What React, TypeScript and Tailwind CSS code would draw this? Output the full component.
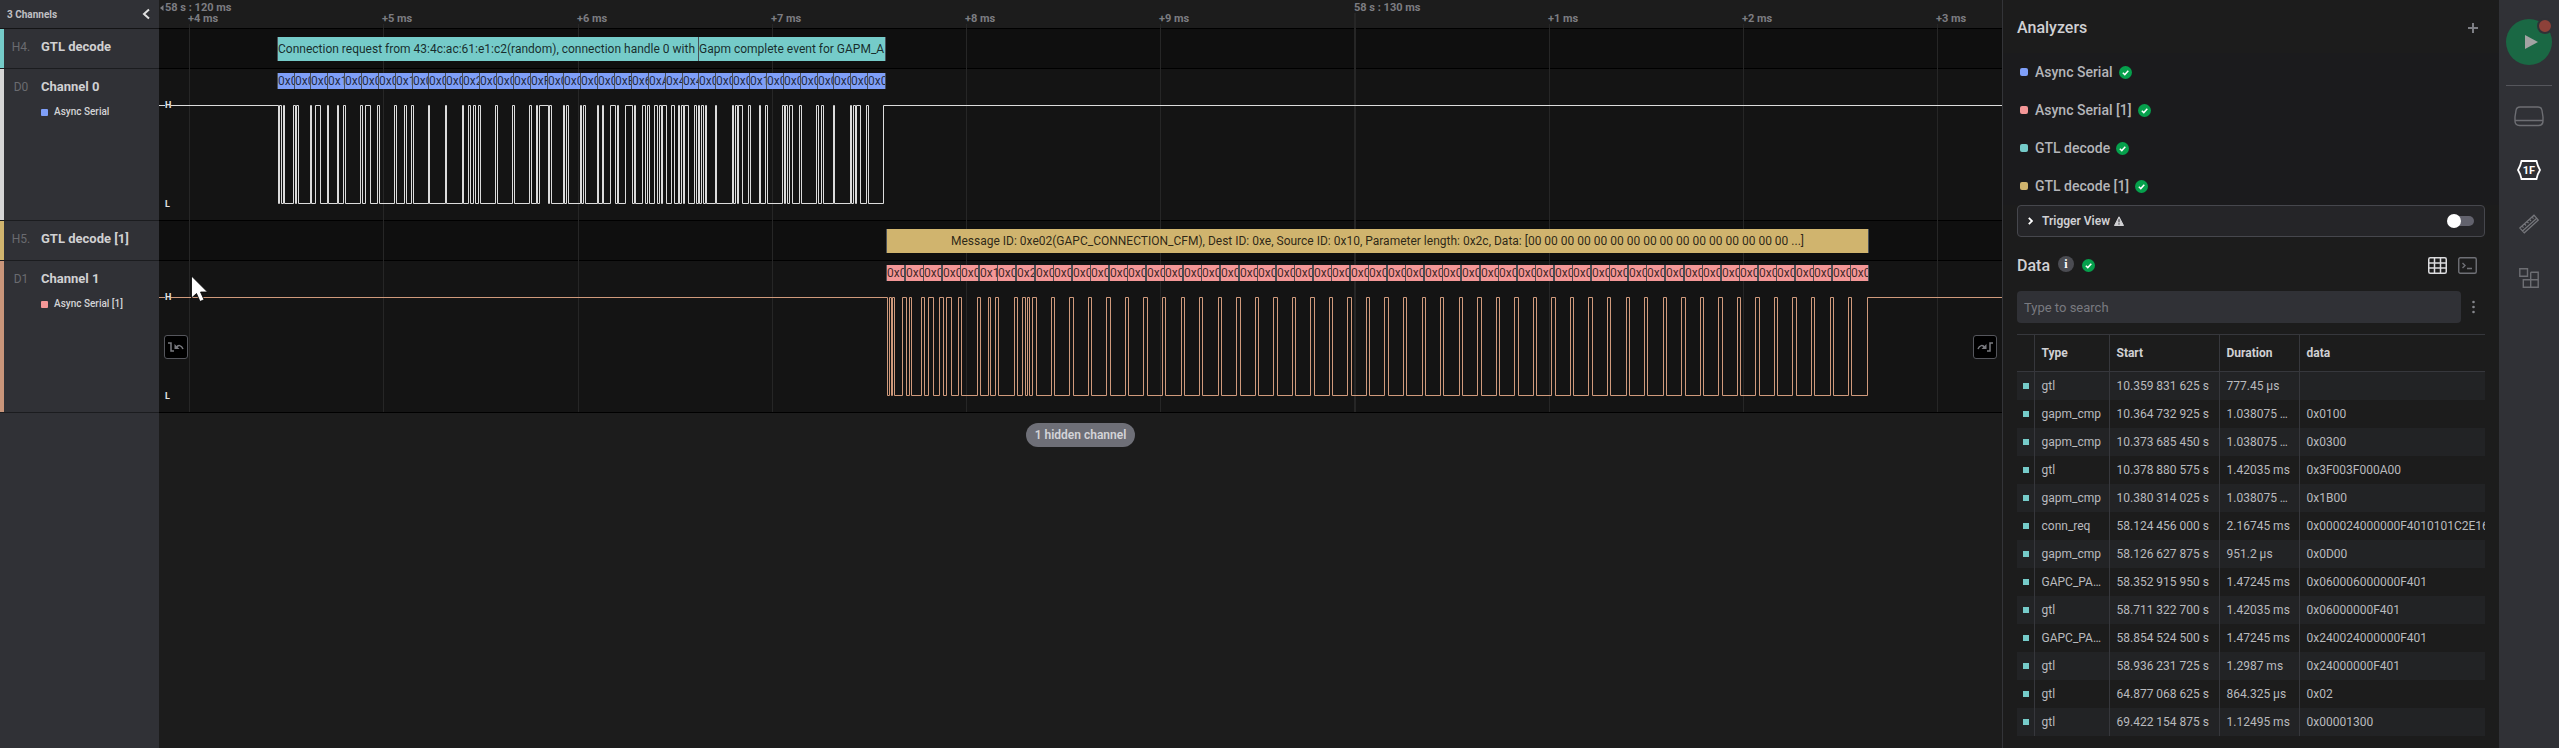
import React from "react";

const LEFT = 159;

const wave0 = [
  278, 279, 281, 283, 284, 293, 295, 296, 298, 310, 311, 315, 320, 327, 328, 337, 338, 343, 345, 360, 362, 365, 370, 377, 379,
  394, 396, 404, 406, 411, 413, 428, 429, 445, 446, 462, 463, 468, 470, 473, 475, 478, 480, 495, 497, 512, 514, 529, 531, 536,
  537, 539, 548, 549, 551, 563, 564, 566, 568, 580, 581, 583, 585, 597, 598, 602, 603, 610, 615, 617, 618, 625, 632, 634, 635,
  642, 645, 647, 649, 654, 657, 659, 661, 662, 666, 671, 674, 678, 679, 681, 683, 684, 688, 694, 696, 698, 699, 701, 703, 705,
  706, 715, 716, 732, 733, 735, 737, 738, 742, 748, 750, 759, 760, 765, 767, 782, 784, 785, 787, 789, 792, 799, 801, 816, 818,
  821, 823, 833, 834, 850, 851, 853, 855, 856, 860, 866, 868, 883,
];

const wave1 = [
  887, 889, 891, 892, 894, 902, 906, 909, 911, 921, 924, 928, 933, 939, 943, 946, 951, 958, 961, 977, 980, 988, 990, 995, 998,
  1014, 1017, 1022, 1025, 1027, 1029, 1032, 1036, 1051, 1054, 1069, 1073, 1088, 1091, 1106, 1110, 1125, 1128, 1143, 1147, 1162,
  1165, 1181, 1184, 1199, 1202, 1218, 1221, 1236, 1240, 1255, 1258, 1273, 1277, 1292, 1295, 1310, 1314, 1329, 1332, 1347, 1351,
  1366, 1369, 1384, 1388, 1403, 1406, 1422, 1425, 1440, 1443, 1459, 1462, 1477, 1481, 1496, 1499, 1514, 1518, 1533, 1536, 1551,
  1555, 1570, 1573, 1588, 1592, 1607, 1610, 1626, 1629, 1644, 1647, 1663, 1666, 1681, 1685, 1700, 1703, 1718, 1722, 1737, 1740,
  1755, 1759, 1774, 1777, 1792, 1796, 1811, 1814, 1830, 1833, 1848, 1851, 1867,
];

const bytes0 = [
  278, 295, 311, 328, 345, 362, 379, 396, 413, 429, 446, 463, 480, 497, 514, 531, 548, 564, 581, 598, 615, 632, 649, 666, 683,
  699, 716, 733, 750, 767, 784, 801, 818, 834, 851, 868, 886,
];
const bytes0Text: Record<number, string> = { 3: "0x1", 7: "0x1", 11: "0x2", 15: "0xF", 20: "0xE", 21: "0x6", 22: "0xA", 23: "0x4", 24: "0x4", 28: "0x1" };

const bytes1 = [
  887, 906, 924, 943, 961, 980, 998, 1017, 1036, 1054, 1073, 1091, 1110, 1128, 1147, 1165, 1184, 1202, 1221, 1240, 1258, 1277,
  1295, 1314, 1332, 1351, 1369, 1388, 1406, 1425, 1443, 1462, 1481, 1499, 1518, 1536, 1555, 1573, 1592, 1610, 1629, 1647, 1666,
  1685, 1703, 1722, 1740, 1759, 1777, 1796, 1814, 1833, 1851, 1869,
];
const bytes1Text: Record<number, string> = { 5: "0x1", 7: "0x2" };

function Wave({ edges, color }: { edges: number[]; color: string }) {
  let high = true;
  let d = "M0 0.5";
  for (const e of edges) {
    d += `H${e - LEFT + 0.5}V${high ? 98.5 : 0.5}`;
    high = !high;
  }
  d += "H2400";
  return (
    <svg className="block h-[99px] w-full overflow-hidden" aria-hidden="true">
      <path d={d} fill="none" stroke={color} strokeWidth="1" />
    </svg>
  );
}

function Bytes({ starts, labels, className }: { starts: number[]; labels: Record<number, string>; className: string }) {
  return (
    <div className="flex h-4 text-xs leading-4 text-black/75" style={{ marginLeft: starts[0] - LEFT - 1 }}>
      <span className="w-px shrink-0 bg-[#4a5058]" />
      {starts.slice(0, -1).map((s, i) => {
        const width = starts[i + 1] - s;
        return (
          <div key={s} className={`shrink-0 overflow-hidden border-[#4a5058] ${className}`} style={{ width, borderRightWidth: Math.max(1, width - 17) }}>
            {labels[i] ?? "0x0"}
          </div>
        );
      })}
    </div>
  );
}

const ticks: { x: number; label: string; major?: boolean }[] = [
  { x: 189, label: "+4 ms" },
  { x: 383, label: "+5 ms" },
  { x: 578, label: "+6 ms" },
  { x: 772, label: "+7 ms" },
  { x: 966, label: "+8 ms" },
  { x: 1160, label: "+9 ms" },
  { x: 1354, label: "58 s : 130 ms", major: true },
  { x: 1549, label: "+1 ms" },
  { x: 1743, label: "+2 ms" },
  { x: 1937, label: "+3 ms" },
];

function Level({ color, edges }: { color: string; edges: number[] }) {
  return (
    <div className="relative mt-4">
      <Wave edges={edges} color={color} />
      <span className="absolute -top-2 left-[6px] h-4 text-[9px] leading-4 font-bold text-[#e4e4e4]">
        <span className="bg-[#141414]">H</span>
      </span>
      <span className="absolute -bottom-2 left-[6px] h-4 text-[9px] leading-4 font-bold text-[#e4e4e4]">L</span>
    </div>
  );
}

function Timeline() {
  return (
    <main className="relative min-w-0 flex-1 overflow-hidden bg-[#1c1c1c]">
      <header className="relative h-[29px] border-b border-black text-[11px] leading-3 font-bold text-[#7c7d82]">
        <span className="absolute top-[2px] left-0 flex items-center whitespace-nowrap">
          <svg className="h-[6px] w-[6px]" viewBox="0 0 6 6" aria-hidden="true">
            <path d="M4.500 0v6L1 3z" fill="currentColor" />
          </svg>
          58 s : 120 ms
        </span>
        {ticks.map((t) => (
          <span key={t.x} className={`absolute whitespace-nowrap ${t.major ? "top-[2px]" : "top-[13px]"}`} style={{ left: t.x - LEFT - (t.major ? 0 : 1) }}>
            {t.label}
          </span>
        ))}
      </header>
      <section className="h-10 border-b border-black bg-[#0f0f0f] pt-2">
        <div className="relative z-10 ml-[118px] flex h-6 text-xs leading-6 text-black/80">
          <div className="w-[421px] shrink-0 overflow-hidden border-l border-[#4a5058] bg-[#75cbc9] whitespace-nowrap">
            Connection request from 43:4c:ac:61:e1:c2(random), connection handle 0 with
          </div>
          <div className="w-[188px] shrink-0 overflow-hidden border-x border-[#4a5058] bg-[#75cbc9] whitespace-nowrap">
            Gapm complete event for GAPM_A
          </div>
        </div>
      </section>
      <section className="h-[152px] border-b border-black bg-[#141414] pt-1">
        <div className="relative z-10">
          <Bytes starts={bytes0} labels={bytes0Text} className="bg-[#7f9ff8]" />
          <Level edges={wave0} color="#dcdcdc" />
        </div>
      </section>
      <section className="h-10 border-b border-black bg-[#0f0f0f] pt-2">
        <div className="relative z-10 ml-[727px] h-6 w-[983px] overflow-hidden border-x border-[#4a5058] bg-[#d0b46e] text-center text-xs leading-6 whitespace-nowrap text-black/80">
          Message ID: 0xe02(GAPC_CONNECTION_CFM), Dest ID: 0xe, Source ID: 0x10, Parameter length: 0x2c, Data: [00 00 00 00 00 00 00 00 00 00 00 00 00 00 00 00 ...]
        </div>
      </section>
      <section className="h-[152px] border-b border-black bg-[#141414] pt-1">
        <div className="relative z-10">
          <Bytes starts={bytes1} labels={bytes1Text} className="bg-[#f49797]" />
          <Level edges={wave1} color="#d09a7c" />
        </div>
      </section>
      <svg className="pointer-events-none absolute top-0 left-0 h-[412px] w-full" aria-hidden="true">
        {ticks.map((t) => (
          <rect key={t.x} x={t.x - LEFT} y={t.major ? 13 : 24} width={t.major ? 2 : 1} height="400" fill="#262626" />
        ))}
      </svg>
      <div className="flex justify-center pt-[10px]">
        <button className="h-6 rounded-xl bg-[#6e6f77] px-[9px] text-xs leading-6 font-semibold text-[#d4d4d8]">1 hidden channel</button>
      </div>
      <button
        aria-label="Previous edge"
        className="absolute top-[335px] left-[5px] z-20 flex h-6 w-6 items-center justify-center rounded-[3px] border border-[#55565c] bg-black text-[#7a7b80]"
      >
        <svg className="h-4 w-4" viewBox="0 0 16 16" fill="none" stroke="currentColor" strokeWidth="1.500" aria-hidden="true">
          <path d="M0 4h3v8h3M8.500 8.500c1.500-3 5-2.500 6.500 1.500" />
          <path d="M6.500 5v5h5z" fill="currentColor" stroke="none" />
        </svg>
      </button>
      <button
        aria-label="Next edge"
        className="absolute top-[335px] right-[5px] z-20 flex h-6 w-6 items-center justify-center rounded-[3px] border border-[#55565c] bg-black text-[#7a7b80]"
      >
        <svg className="h-4 w-4" viewBox="0 0 16 16" fill="none" stroke="currentColor" strokeWidth="1.500" aria-hidden="true">
          <path d="M1 10c1.500-4 5-4.500 6.500-1.500M10 12h3V4h3" />
          <path d="M9.500 5v5h-5z" fill="currentColor" stroke="none" />
        </svg>
      </button>
      <svg className="absolute top-[275px] left-8 z-30 h-7 w-5" viewBox="0 0 20 28" aria-hidden="true">
        <path d="M.5 1v22l5-4.500 3.500 8 4-1.800-3.500-7.700h7z" fill="#fff" stroke="#000" strokeWidth=".8" />
      </svg>
    </main>
  );
}

function Row({ id, name, stripe, height, child, childColor }: { id: string; name: string; stripe: string; height: string; child?: string; childColor?: string }) {
  return (
    <li className={`flex border-b border-[#1b1c1f] ${height}`}>
      <span className={`w-1 ${stripe}`} />
      <span className="mr-[3px] w-[34px] pt-[10px] text-center text-xs leading-4 text-[#6a6b70]">{id}</span>
      <div className="pt-[10px]">
        <div className="text-[13px] leading-4 font-bold text-[#d0d0d2]">{name}</div>
        {child && (
          <div className="mt-[9px] flex items-center gap-[6px] text-[10px] leading-4 font-medium text-[#d4d4d6]">
            <i className={`h-[7px] w-[7px] rounded-[1px] ${childColor}`} />
            {child}
          </div>
        )}
      </div>
    </li>
  );
}

function Channels() {
  return (
    <aside className="w-[159px] shrink-0 bg-[#303136]">
      <header className="flex h-[29px] items-center justify-between border-b border-[#141416] pr-[9px] pl-[7px] text-[10px] font-bold text-[#c0c0c4]">
        3 Channels
        <button aria-label="Collapse channels">
          <svg className="h-3 w-2" viewBox="0 0 8 12" fill="none" stroke="#e0e0e0" strokeWidth="2" aria-hidden="true">
            <path d="M7 1.500 2 6l5 4.500" />
          </svg>
        </button>
      </header>
      <ul>
        <Row id="H4." name="GTL decode" stripe="bg-[#75cbc9]" height="h-10" />
        <Row id="D0" name="Channel 0" stripe="bg-[#d6d6d6]" height="h-[152px]" child="Async Serial" childColor="bg-[#7f9ff8]" />
        <Row id="H5." name="GTL decode [1]" stripe="bg-[#d0b46e]" height="h-10" />
        <Row id="D1" name="Channel 1" stripe="bg-[#c9957a]" height="h-[152px]" child="Async Serial [1]" childColor="bg-[#f49797]" />
      </ul>
    </aside>
  );
}

function Check() {
  return (
    <svg className="h-[13px] w-[13px] shrink-0" viewBox="0 0 13 13" aria-hidden="true">
      <circle cx="6.500" cy="6.500" r="6.500" fill="#06a04c" />
      <path d="m3.800 6.700 2 1.900 3.500-3.900" fill="none" stroke="#fff" strokeWidth="1.500" />
    </svg>
  );
}

const analyzers = [
  ["Async Serial", "bg-[#7f9ff8]"],
  ["Async Serial [1]", "bg-[#f49797]"],
  ["GTL decode", "bg-[#75cbc9]"],
  ["GTL decode [1]", "bg-[#d0b46e]"],
];

const data = [
  ["gtl", "10.359 831 625 s", "777.45 µs", ""],
  ["gapm_cmp", "10.364 732 925 s", "1.038075 …", "0x0100"],
  ["gapm_cmp", "10.373 685 450 s", "1.038075 …", "0x0300"],
  ["gtl", "10.378 880 575 s", "1.42035 ms", "0x3F003F000A00"],
  ["gapm_cmp", "10.380 314 025 s", "1.038075 …", "0x1B00"],
  ["conn_req", "58.124 456 000 s", "2.16745 ms", "0x000024000000F4010101C2E161"],
  ["gapm_cmp", "58.126 627 875 s", "951.2 µs", "0x0D00"],
  ["GAPC_PA…", "58.352 915 950 s", "1.47245 ms", "0x060006000000F401"],
  ["gtl", "58.711 322 700 s", "1.42035 ms", "0x06000000F401"],
  ["GAPC_PA…", "58.854 524 500 s", "1.47245 ms", "0x240024000000F401"],
  ["gtl", "58.936 231 725 s", "1.2987 ms", "0x24000000F401"],
  ["gtl", "64.877 068 625 s", "864.325 µs", "0x02"],
  ["gtl", "69.422 154 875 s", "1.12495 ms", "0x00001300"],
];

function Panel() {
  return (
    <aside className="w-[497px] shrink-0 border-l border-[#333438] bg-[#1c1c1c] px-[14px]">
      <header className="flex h-[53px] items-center justify-between pt-[2px] pr-[3px]">
        <h2 className="text-base font-medium text-[#d0d0d3]">Analyzers</h2>
        <button aria-label="Add analyzer" className="p-1">
          <svg className="h-[10px] w-[10px]" viewBox="0 0 10 10" stroke="#7d7e84" strokeWidth="2" aria-hidden="true">
            <path d="M5 0v10M0 5h10" />
          </svg>
        </button>
      </header>
      <ul className="-mx-[14px] bg-[#1b1b1d] px-[14px]">
        {analyzers.map(([name, color]) => (
          <li key={name} className="flex h-[38px] items-center pl-[3px] text-sm font-medium text-[#b4b5b9]">
            <i className={`mr-[7px] h-2 w-2 rounded-[2px] ${color}`} />
            <span className="mr-[6px]">{name}</span>
            <Check />
          </li>
        ))}
      </ul>
      <div className="flex h-8 items-center rounded-sm border border-[#46474d] bg-[#252528] px-[10px]">
        <svg className="h-2 w-[5px]" viewBox="0 0 5 8" fill="none" stroke="#fff" strokeWidth="1.800" aria-hidden="true">
          <path d="m.8.800 3.200 3.200L.8 7.200" />
        </svg>
        <label htmlFor="trigger" className="ml-[9px] text-xs font-semibold text-[#d0d0d3]">
          Trigger View
        </label>
        <svg className="ml-1 h-[10px] w-[10px]" viewBox="0 0 10 10" aria-hidden="true">
          <path d="M5 .8 9.500 9.500H.5z" fill="#d0d0d3" stroke="#d0d0d3" strokeLinejoin="round" />
          <path d="M5 3.200V6.300M5 7.300V8.600" stroke="#252528" />
        </svg>
        <span className="relative ml-auto h-[14px] w-[27px]">
          <input id="trigger" type="checkbox" role="switch" className="absolute top-[2px] right-0 h-[10px] w-6 appearance-none rounded-full bg-[#62626d]" />
          <i className="pointer-events-none absolute top-0 left-0 h-[14px] w-[14px] rounded-full bg-white" />
        </span>
      </div>
      <header className="flex h-[54px] items-center pt-[3px] pr-2">
        <h2 className="text-base font-medium text-[#d0d0d3]">Data</h2>
        <span className="mr-2 mb-[3px] ml-2 flex h-4 w-4 items-center justify-center rounded-full bg-[#4b4c52] font-['Liberation_Serif',serif] text-xs font-bold text-white">
          i
        </span>
        <Check />
        <button aria-label="Table view" className="ml-auto">
          <svg className="h-[17px] w-[19px]" viewBox="0 0 19 17" fill="none" stroke="#dcdcde" strokeWidth="1.500" aria-hidden="true">
            <rect x=".75" y=".75" width="17.500" height="15.500" rx="1.500" />
            <path d="M6.500 1v15M12.500 1v15M1 6h17M1 11h17" />
          </svg>
        </button>
        <button aria-label="Terminal view" className="ml-[11px]">
          <svg className="h-[17px] w-[19px]" viewBox="0 0 19 17" fill="none" stroke="#6f7076" strokeWidth="1.400" aria-hidden="true">
            <rect x=".75" y=".75" width="17.500" height="15.500" rx="1.500" />
            <path d="m4.500 6 2.500 2.500L4.500 11M9 11.500h5" />
          </svg>
        </button>
      </header>
      <div className="flex items-center">
        <input
          aria-label="Search"
          placeholder="Type to search"
          className="h-8 min-w-0 flex-1 rounded-sm bg-[#303136] px-[7px] text-[13px] text-[#d0d0d3] placeholder:text-[#797a80]"
        />
        <button aria-label="More options" className="flex h-8 w-6 items-center justify-center">
          <svg className="h-[14px] w-[3px]" viewBox="0 0 3 14" fill="#85868c" aria-hidden="true">
            <circle cx="1.500" cy="2" r="1.300" />
            <circle cx="1.500" cy="7" r="1.300" />
            <circle cx="1.500" cy="12" r="1.300" />
          </svg>
        </button>
      </div>
      <table className="mt-[11px] w-full table-fixed border-collapse text-left text-xs leading-4 text-[#b9babe]">
        <thead>
          <tr className="h-[37px] border-y border-[#36373c] text-[#d0d0d3]">
            <th className="w-[17px] border-r border-[#36373c]" aria-label="Color" />
            <th className="w-[75px] border-r border-[#36373c] px-[7px] font-bold">Type</th>
            <th className="w-[110px] border-r border-[#36373c] px-[7px] font-bold">Start</th>
            <th className="w-20 border-r border-[#36373c] px-[7px] font-bold">Duration</th>
            <th className="px-[7px] font-bold">data</th>
          </tr>
        </thead>
        <tbody>
          {data.map(([type, start, duration, value]) => (
            <tr key={start} className="h-7 whitespace-nowrap odd:bg-[#222325]">
              <td className="border-r border-[#36373c] pl-[6px]">
                <i className="block h-[6px] w-[6px] bg-[#75cbc9]" />
              </td>
              <td className="border-r border-[#36373c] px-[7px]">{type}</td>
              <td className="border-r border-[#36373c] px-[7px]">{start}</td>
              <td className="border-r border-[#36373c] pl-[7px]">{duration}</td>
              <td className="overflow-hidden pl-[7px]">{value}</td>
            </tr>
          ))}
        </tbody>
      </table>
    </aside>
  );
}

function Rail() {
  return (
    <nav className="flex w-[60px] shrink-0 flex-col items-center bg-[#303136] pt-[19px]">
      <button aria-label="Start capture" className="relative flex h-[46px] w-[46px] items-center justify-center rounded-full bg-[#1a6844]">
        <svg className="ml-[3px] h-4 w-4" viewBox="0 0 16 16" fill="#a3a3a3" aria-hidden="true">
          <path d="M2 1v14l13-7z" />
        </svg>
        <i className="absolute -top-px -right-px h-4 w-4 rounded-full border-2 border-[#303136] bg-[#8d4139]" />
      </button>
      <hr className="mt-5 w-[46px] border-[#55565c]" />
      <button aria-label="Device" className="mt-5 h-[21px]">
        <svg className="h-[21px] w-[30px]" viewBox="0 0 30 21" fill="none" stroke="#6d6e73" strokeWidth="1.400" aria-hidden="true">
          <path d="M6 1h18q3.500 0 4 3.500L29 11v4q0 4.500-4.500 4.500h-19Q1 19.500 1 15v-4l1-6.500Q2.500 1 6 1zM1 14.500h28" />
        </svg>
      </button>
      <button aria-label="Analyzers" className="mt-[31px] h-6 font-bold text-white">
        <svg className="h-6 w-6" viewBox="0 0 24 24" fill="none" stroke="#fff" strokeWidth="1.800" aria-hidden="true">
          <path d="M4.500 3h15q1 5 3.500 9-2.500 4-3.500 9h-15Q3.500 16 1 12 3.500 8 4.500 3z" />
          <text x="12" y="16" textAnchor="middle" fill="#fff" stroke="none" fontSize="11">
            1F
          </text>
        </svg>
      </button>
      <button aria-label="Measurements" className="mt-8 h-5">
        <svg className="h-5 w-5" viewBox="0 0 20 20" fill="none" stroke="#75767b" strokeWidth="1.200" aria-hidden="true">
          <path d="M.8 14 15 1.200 19.300 6 5.300 18.800zM3.500 17 17.800 4.200M3 12l1.500 1.700M5.500 9.800 7 11.500M8 7.500l1.500 1.700M10.500 5.300 12 7M13 3l1.500 1.700" />
        </svg>
      </button>
      <button aria-label="Extensions" className="mt-[34px] h-5">
        <svg className="h-5 w-5" viewBox="0 0 20 20" fill="none" stroke="#6d6e73" strokeWidth="1.400" aria-hidden="true">
          <path d="M.8.800h7.700v7.500H.8zM11.700 4.200h7.500v15H4.300v-7.400h14.900M11.700 4.200v15" />
        </svg>
      </button>
    </nav>
  );
}

export default function App() {
  return (
    <div className="flex min-h-screen overflow-hidden bg-[#1c1c1c] font-[Roboto,sans-serif]">
      <Channels />
      <Timeline />
      <Panel />
      <Rail />
    </div>
  );
}
